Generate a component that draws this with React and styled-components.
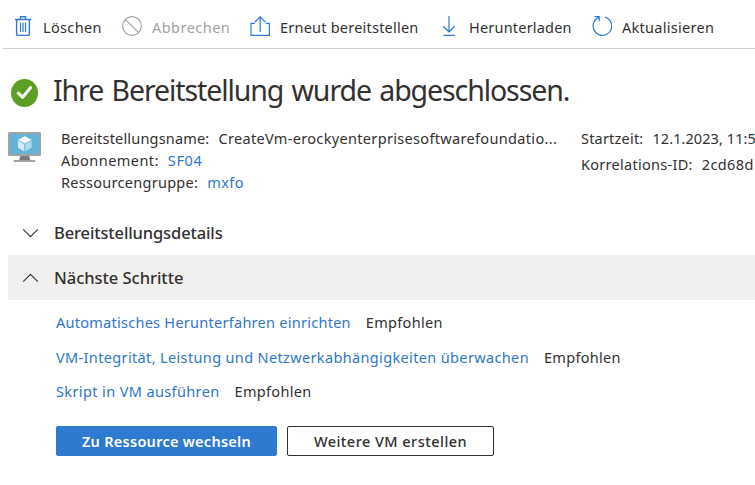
import React from 'react';
import styled, { createGlobalStyle } from 'styled-components';

const GlobalStyle = createGlobalStyle`
  * { box-sizing: border-box; }
  body {
    margin: 0;
    background: #fff;
    color: #323130;
    font-family: "Noto Sans", "Open Sans", sans-serif;
    font-size: 14.5px;
    overflow: hidden;
  }
`;

const Page = styled.main`
  width: 755px;
  height: 485px;
  overflow: hidden;
`;

const Text = styled.span`
  letter-spacing: ${(p) => p.$track || 0}px;
  white-space: nowrap;
`;

const Toolbar = styled.nav`
  display: grid;
  grid-template-columns: 109px 128px 189px 153px 1fr;
  height: 49px;
  margin-left: 3px;
  padding: 16px 0 0 10px;
  border-bottom: 1px solid #d0d0d0;
`;

const Command = styled.div`
  display: flex;
  gap: 10px;
  height: 23px;
  line-height: 23px;
  color: ${(p) => (p.$disabled ? '#a3a2a1' : '#323130')};
`;

const Icon = styled.svg`
  flex: none;
  display: block;
  width: 20px;
  height: 20px;
  fill: none;
  stroke: ${(p) => p.$color || '#2f7ad1'};
  stroke-width: 1.2;
`;

const TitleRow = styled.header`
  display: flex;
  gap: 14px;
  padding: 29px 0 0 10px;
`;

const StatusIcon = styled.svg`
  width: 29px;
  height: 29px;
`;

const Title = styled.h1`
  margin: -8px 0 0;
  height: 39px;
  line-height: 40px;
  font-size: 28.5px;
  font-weight: 400;
  letter-spacing: -1.09px;
  word-spacing: 2px;
  white-space: nowrap;
`;

const Summary = styled.section`
  display: grid;
  grid-template-columns: 53px 520px 1fr;
  height: 101px;
  padding: 20px 0 0 8px;
`;

const VmIcon = styled.svg`
  width: 34px;
  height: 32px;
  margin-top: 3px;
`;

const FactList = styled.div`
  display: flex;
  flex-direction: column;
  margin-top: -2px;
`;

const Fact = styled.div`
  display: flex;
  gap: 9px;
  height: ${(p) => p.$height || 22}px;
  line-height: 22px;
`;

const Link = styled(Text)`
  color: #2f76cc;
`;

const SectionHead = styled.div`
  display: flex;
  align-items: center;
  gap: 15px;
  height: 45px;
  margin-left: 8px;
  padding-left: 14px;
  background: ${(p) => (p.$open ? '#f2f0ef' : 'transparent')};
`;

const SectionTitle = styled.h2`
  margin: 0;
  font-size: 16.5px;
  font-weight: 500;
  line-height: 24px;
  letter-spacing: ${(p) => p.$track}px;
`;

const Chevron = styled.svg`
  width: 17px;
  height: 10px;
  fill: none;
  stroke: #323130;
  stroke-width: 1.1;
`;

const Steps = styled.div`
  display: flex;
  flex-direction: column;
  gap: 12.5px;
  padding: 11px 0 0 56px;
`;

const Step = styled.div`
  display: flex;
  gap: 15px;
  height: 22px;
  line-height: 22px;
`;

const Actions = styled.div`
  display: flex;
  gap: 10px;
  padding: 24px 0 0 56px;
`;

const Button = styled.button`
  width: ${(p) => p.$width}px;
  height: 30px;
  padding: 0;
  border: 1px solid ${(p) => (p.$primary ? '#2f7ad1' : '#323130')};
  border-radius: 2px;
  background: ${(p) => (p.$primary ? '#2f7ad1' : '#fff')};
  color: ${(p) => (p.$primary ? '#fff' : '#323130')};
  font-family: inherit;
  font-size: 14.5px;
  font-weight: ${(p) => (p.$primary ? 600 : 500)};
  line-height: 28px;
`;

const commands = [
  {
    label: 'Löschen',
    track: 0.35,
    icon: (
      <Icon>
        <path d="M2 3.5H18M7.5 3V.7h5V3M3.6 3.5V18q0 1.4 1.4 1.4h10q1.4 0 1.4-1.4V3.5" strokeWidth="1.4" />
        <path d="M7.5 6.5V16M10 6.5V16M12.5 6.5V16" />
      </Icon>
    ),
  },
  {
    label: 'Abbrechen',
    track: 0.47,
    disabled: true,
    icon: (
      <Icon $color="#a3a2a1">
        <circle cx="10" cy="10" r="9.4" />
        <path d="M3.3 3.3 16.7 16.7" />
      </Icon>
    ),
  },
  {
    label: 'Erneut bereitstellen',
    track: 0.22,
    icon: (
      <Icon>
        <path d="M4.7 7.4H1V19.4H19.4V7.4H15.7M10.2 16V1M4.9 6.2 10.2.9 15.5 6.2" />
      </Icon>
    ),
  },
  {
    label: 'Herunterladen',
    track: 0.2,
    icon: (
      <Icon>
        <path d="M10 0V15.5M4.3 10.2 10 15.8 15.7 10.2M4.3 19.3H15.8" />
      </Icon>
    ),
  },
  {
    label: 'Aktualisieren',
    track: 0.28,
    icon: (
      <Icon>
        <path d="M12.9 1.1A9.3 9.3 0 1 1 6.5 1.6M2.6.7H7.2V5.3" />
      </Icon>
    ),
  },
];

const steps = [
  ['Automatisches Herunterfahren einrichten', 0.265],
  ['VM-Integrität, Leistung und Netzwerkabhängigkeiten überwachen', 0.355],
  ['Skript in VM ausführen', 0.38],
];

export default function App() {
  return (
    <Page>
      <GlobalStyle />
      <Toolbar>
        {commands.map((c) => (
          <Command key={c.label} $disabled={c.disabled}>
            {c.icon}
            <Text $track={c.track}>{c.label}</Text>
          </Command>
        ))}
      </Toolbar>
      <TitleRow>
        <StatusIcon viewBox="0 0 29 29">
          <ellipse cx="14.5" cy="15" rx="13.5" ry="14" fill="#5ba024" />
          <path d="M8.3 15.2 12.6 19.3 20.5 9.7" fill="none" stroke="#fff" strokeWidth="3" strokeLinecap="round" strokeLinejoin="round" />
        </StatusIcon>
        <Title>Ihre Bereitstellung wurde abgeschlossen.</Title>
      </TitleRow>
      <Summary>
        <VmIcon viewBox="0 0 34 32">
          <path d="M12.5 23H21L22.5 29H11Z" fill="#7b7b7b" />
          <rect x="5.5" y="28" width="22" height="2" rx="1" fill="#a3a3a3" />
          <rect x="0" y="0" width="33" height="24" rx="1.5" fill="#a2a2a2" />
          <rect x="2" y="2" width="29" height="19.8" fill="#61b3da" />
          <path d="M16.8 4.2 23.5 7.8 16.8 11.4 10 7.8Z" fill="#fff" />
          <path d="M10 8.6 16.3 12.2V19.5L10 15.8Z" fill="#d3ecf5" />
          <path d="M23.6 8.6 17.3 12.2V19.5L23.6 15.8Z" fill="#b3dceb" />
          <rect x="16" y="0.8" width="1.3" height="1.3" fill="#b4d52a" />
        </VmIcon>
        <FactList>
          <Fact>
            <Text $track={0.18}>Bereitstellungsname:</Text>
            <Text $track={0.329}>CreateVm-erockyenterprisesoftwarefoundatio...</Text>
          </Fact>
          <Fact>
            <Text $track={0.45}>Abonnement:</Text>
            <Link $track={0.6}>SF04</Link>
          </Fact>
          <Fact>
            <Text $track={0.281}>Ressourcengruppe:</Text>
            <Link $track={0.428}>mxfo</Link>
          </Fact>
        </FactList>
        <FactList>
          <Fact $height={26}>
            <Text $track={0.2}>Startzeit:</Text>
            <Text $track={0.08}>12.1.2023, 11:5</Text>
          </Fact>
          <Fact>
            <Text $track={0.28}>Korrelations-ID:</Text>
            <Text $track={0.4}>2cd68d</Text>
          </Fact>
        </FactList>
      </Summary>
      <SectionHead>
        <Chevron viewBox="0 0 17 10"><path d="M1.2 1.3 8.5 8.6 15.8 1.3" /></Chevron>
        <SectionTitle $track={-0.12}>Bereitstellungsdetails</SectionTitle>
      </SectionHead>
      <SectionHead $open>
        <Chevron viewBox="0 0 17 10"><path d="M1.2 8.7 8.5 1.4 15.8 8.7" /></Chevron>
        <SectionTitle $track={-0.03}>Nächste Schritte</SectionTitle>
      </SectionHead>
      <Steps>
        {steps.map(([label, track]) => (
          <Step key={label}>
            <Link $track={track}>{label}</Link>
            <Text $track={0.3}>Empfohlen</Text>
          </Step>
        ))}
      </Steps>
      <Actions>
        <Button $primary $width={221}><Text $track={0.276}>Zu Ressource wechseln</Text></Button>
        <Button $width={207}><Text $track={0.46}>Weitere VM erstellen</Text></Button>
      </Actions>
    </Page>
  );
}
